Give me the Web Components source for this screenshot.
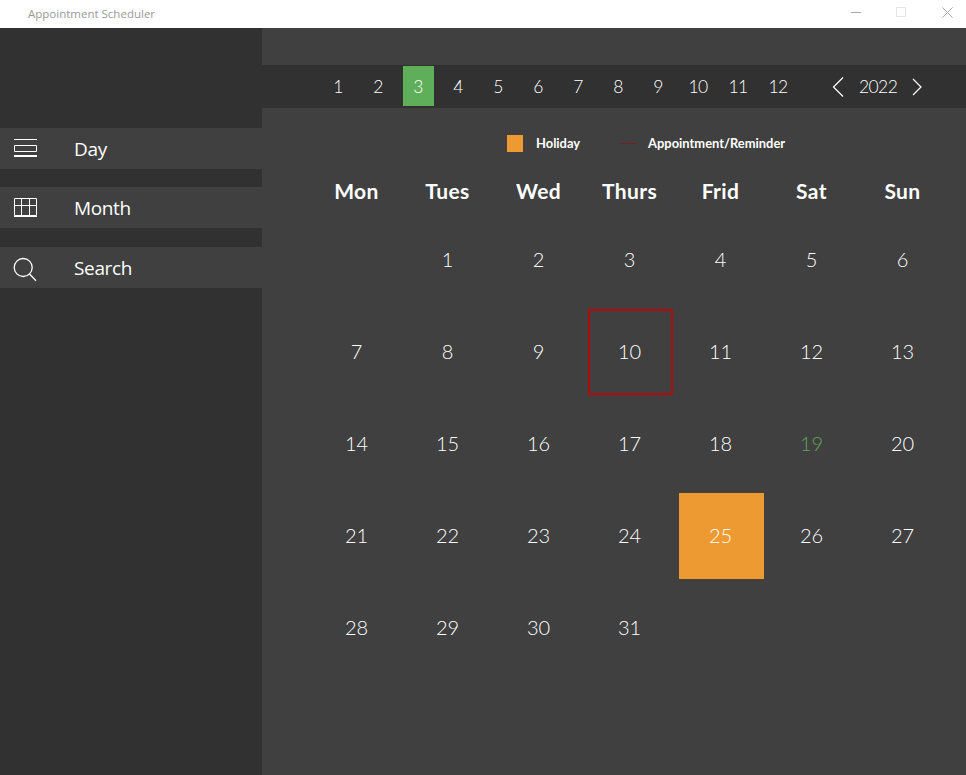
<!DOCTYPE html>
<html>
<head>
<meta charset="utf-8">
<title>Appointment Scheduler</title>
<style>
    html, body { margin: 0; height: 100%; background: #404040; overflow: hidden; }
    scheduler-app { width: 966px; height: 775px; }
</style>
</head>
<body>
<scheduler-app></scheduler-app>
<script>
(function () {
    const DISPLAY_FONT = '"Lato", "Open Sans", sans-serif';

    class TitleBar extends HTMLElement {
        constructor() {
            super();
            this.attachShadow({mode: 'open'}).innerHTML = `
            <style>
            :host { display: flex; align-items: center; height: 28px; background: #fff; padding-left: 28px;
                font: 11.5px "Open Sans", sans-serif; color: #9a9a9a; }
            span { flex: 1; margin-top: -1px; }
            svg { display: block; }
            </style>
            <span>Appointment Scheduler</span>
            <svg width="115" height="28" viewBox="0 0 115 28" fill="none" stroke="#a8a8a8">
                <path d="M0 12.5h10"/>
                <path stroke="#e4e4e4" d="M45.5 7.5h9v9h-9z"/>
                <path d="M91.5 7.5l10 10M101.5 7.5l-10 10"/>
            </svg>`;
        }
    }

    class NavItem extends HTMLElement {
        constructor() {
            super();
            this.attachShadow({mode: 'open'}).innerHTML = `
            <style>
            :host { display: flex; align-items: center; height: 41px; background: #404040; padding-left: 14px;
                font: 19px "Open Sans", sans-serif; color: #fff; }
            ::slotted(svg) { width: 24px; height: 41px; flex: none; overflow: visible; }
            span { margin-left: 36px; letter-spacing: -0.35px; }
            </style>
            <slot name="icon"></slot><span><slot></slot></span>`;
        }
    }

    class SideBar extends HTMLElement {
        constructor() {
            super();
            this.attachShadow({mode: 'open'}).innerHTML = `
            <style>
            :host { display: flex; flex-direction: column; gap: 18px; width: 262px; flex: none;
                box-sizing: border-box; padding-top: 100px; background: #313131; }
            ::slotted(:last-child) { margin-top: 1px; }
            </style>
            <slot></slot>`;
        }
    }

    class MonthBar extends HTMLElement {
        constructor() {
            super();
            const months = [];
            for (let m = 1; m <= 12; m++) {
                months.push(`<span class="month${m === 3 ? ' on' : ''}">${m}</span>`);
            }
            this.attachShadow({mode: 'open'}).innerHTML = `
            <style>
            :host { display: flex; align-items: center; height: 43px; margin-top: 37px; padding-left: 61px;
                box-sizing: border-box; background: #313131; color: #fff;
                font: 300 17.5px ${DISPLAY_FONT}; letter-spacing: -0.6px; }
            .months { display: flex; gap: 9px; }
            .month { width: 31px; height: 40px; line-height: 42px; text-align: center; margin-top: -1px;
                box-sizing: border-box; padding-right: 1px; }
            .on { background: #5fae5a; }
            .year { display: flex; align-items: center; margin-left: 38px; }
            .year span { width: 36px; margin: 0 17px 0 15px; text-align: center; }
            svg { display: block; }
            </style>
            <div class="months">${months.join('')}</div>
            <div class="year">
                <svg width="12" height="20" viewBox="0 0 12 20" fill="none" stroke="#fff" stroke-width="1.2"><path d="M11 .5L1.5 10l9.5 9.5"/></svg>
                <span>2022</span>
                <svg width="10" height="20" viewBox="0 0 10 20" fill="none" stroke="#fff" stroke-width="1.2"><path d="M1 2l8 8-8 8"/></svg>
            </div>`;
        }
    }

    class CalLegend extends HTMLElement {
        constructor() {
            super();
            this.attachShadow({mode: 'open'}).innerHTML = `
            <style>
            :host { display: flex; align-items: center; height: 17px; margin-top: 27px; padding-left: 245px;
                color: #fff; font: 700 12.9px ${DISPLAY_FONT}; }
            span { margin-top: -1px; }
            .swatch { width: 16px; height: 17px; background: #ee9a32; margin-right: 13px; }
            .line { width: 15px; height: 1px; background: #7a1c1c; margin: 0 12px 0 41px; }
            </style>
            <div class="swatch"></div><span>Holiday</span>
            <div class="line"></div><span>Appointment/Reminder</span>`;
        }
    }

    class DayCell extends HTMLElement {
        constructor() {
            super();
            this.attachShadow({mode: 'open'}).innerHTML = `
            <style>
            :host { display: flex; align-items: center; justify-content: center; box-sizing: border-box;
                height: 86px; padding: 0 2px 2px 0; color: #fff; font: 300 20px ${DISPLAY_FONT}; }
            :host([kind="today"]) { border: 2px solid #b30b0b; }
            :host([kind="holiday"]) { background: #ee9a32; }
            :host([kind="reminder"]) { color: #5fa35a; }
            </style>
            <slot></slot>`;
        }
    }

    class CalGrid extends HTMLElement {
        constructor() {
            super();
            const heads = ['Mon', 'Tues', 'Wed', 'Thurs', 'Frid', 'Sat', 'Sun']
                .map(d => `<div class="head">${d}</div>`).join('');
            this.attachShadow({mode: 'open'}).innerHTML = `
            <style>
            :host { display: grid; grid-template-columns: repeat(7, 85px); column-gap: 6px; row-gap: 6px;
                margin: 23px 0 0 53px; }
            .head { height: 26px; margin-top: 2px; margin-bottom: 8px; padding-right: 2px; text-align: center; color: #fff;
                font: 700 21px/28px ${DISPLAY_FONT}; letter-spacing: .4px; }
            </style>
            ${heads}<slot></slot>`;
            for (let i = 0; i < 31; i++) {
                const cell = document.createElement('day-cell');
                const day = i + 1;
                cell.textContent = day;
                if (day === 1) cell.style.gridColumn = '2';
                if (day === 10) cell.setAttribute('kind', 'today');
                if (day === 19) cell.setAttribute('kind', 'reminder');
                if (day === 25) cell.setAttribute('kind', 'holiday');
                this.appendChild(cell);
            }
        }
    }

    class SchedulerApp extends HTMLElement {
        constructor() {
            super();
            this.attachShadow({mode: 'open'}).innerHTML = `
            <style>
            :host { display: flex; flex-direction: column; }
            .body { display: flex; flex: 1; }
            main { flex: 1; background: #404040; }
            svg { display: block; }
            </style>
            <title-bar></title-bar>
            <div class="body">
                <side-bar>
                    <nav-item>
                        <svg slot="icon" viewBox="0 0 24 41" fill="none" stroke="#fff"><path d="M0 11.5h23M.5 17.5h22v6H.5z"/><path stroke-width="2" d="M0 28h23"/></svg>
                        Day
                    </nav-item>
                    <nav-item>
                        <svg slot="icon" viewBox="0 0 24 41" fill="none" stroke="#fff"><path d="M.5 11.5h22v17H.5zM7.5 11.5v17M15.5 11.5v17M.5 18.5h22"/><path d="M0 29.5h23"/></svg>
                        Month
                    </nav-item>
                    <nav-item>
                        <svg slot="icon" viewBox="0 0 24 41" fill="none" stroke="#fff" stroke-width="1.3"><circle cx="9.2" cy="20.5" r="9"/><path d="M15.5 27l6.5 6.7"/></svg>
                        Search
                    </nav-item>
                </side-bar>
                <main>
                    <month-bar></month-bar>
                    <cal-legend></cal-legend>
                    <cal-grid></cal-grid>
                </main>
            </div>`;
        }
    }

    customElements.define('title-bar', TitleBar);
    customElements.define('nav-item', NavItem);
    customElements.define('side-bar', SideBar);
    customElements.define('month-bar', MonthBar);
    customElements.define('cal-legend', CalLegend);
    customElements.define('day-cell', DayCell);
    customElements.define('cal-grid', CalGrid);
    customElements.define('scheduler-app', SchedulerApp);
})();
</script>
</body>
</html>
